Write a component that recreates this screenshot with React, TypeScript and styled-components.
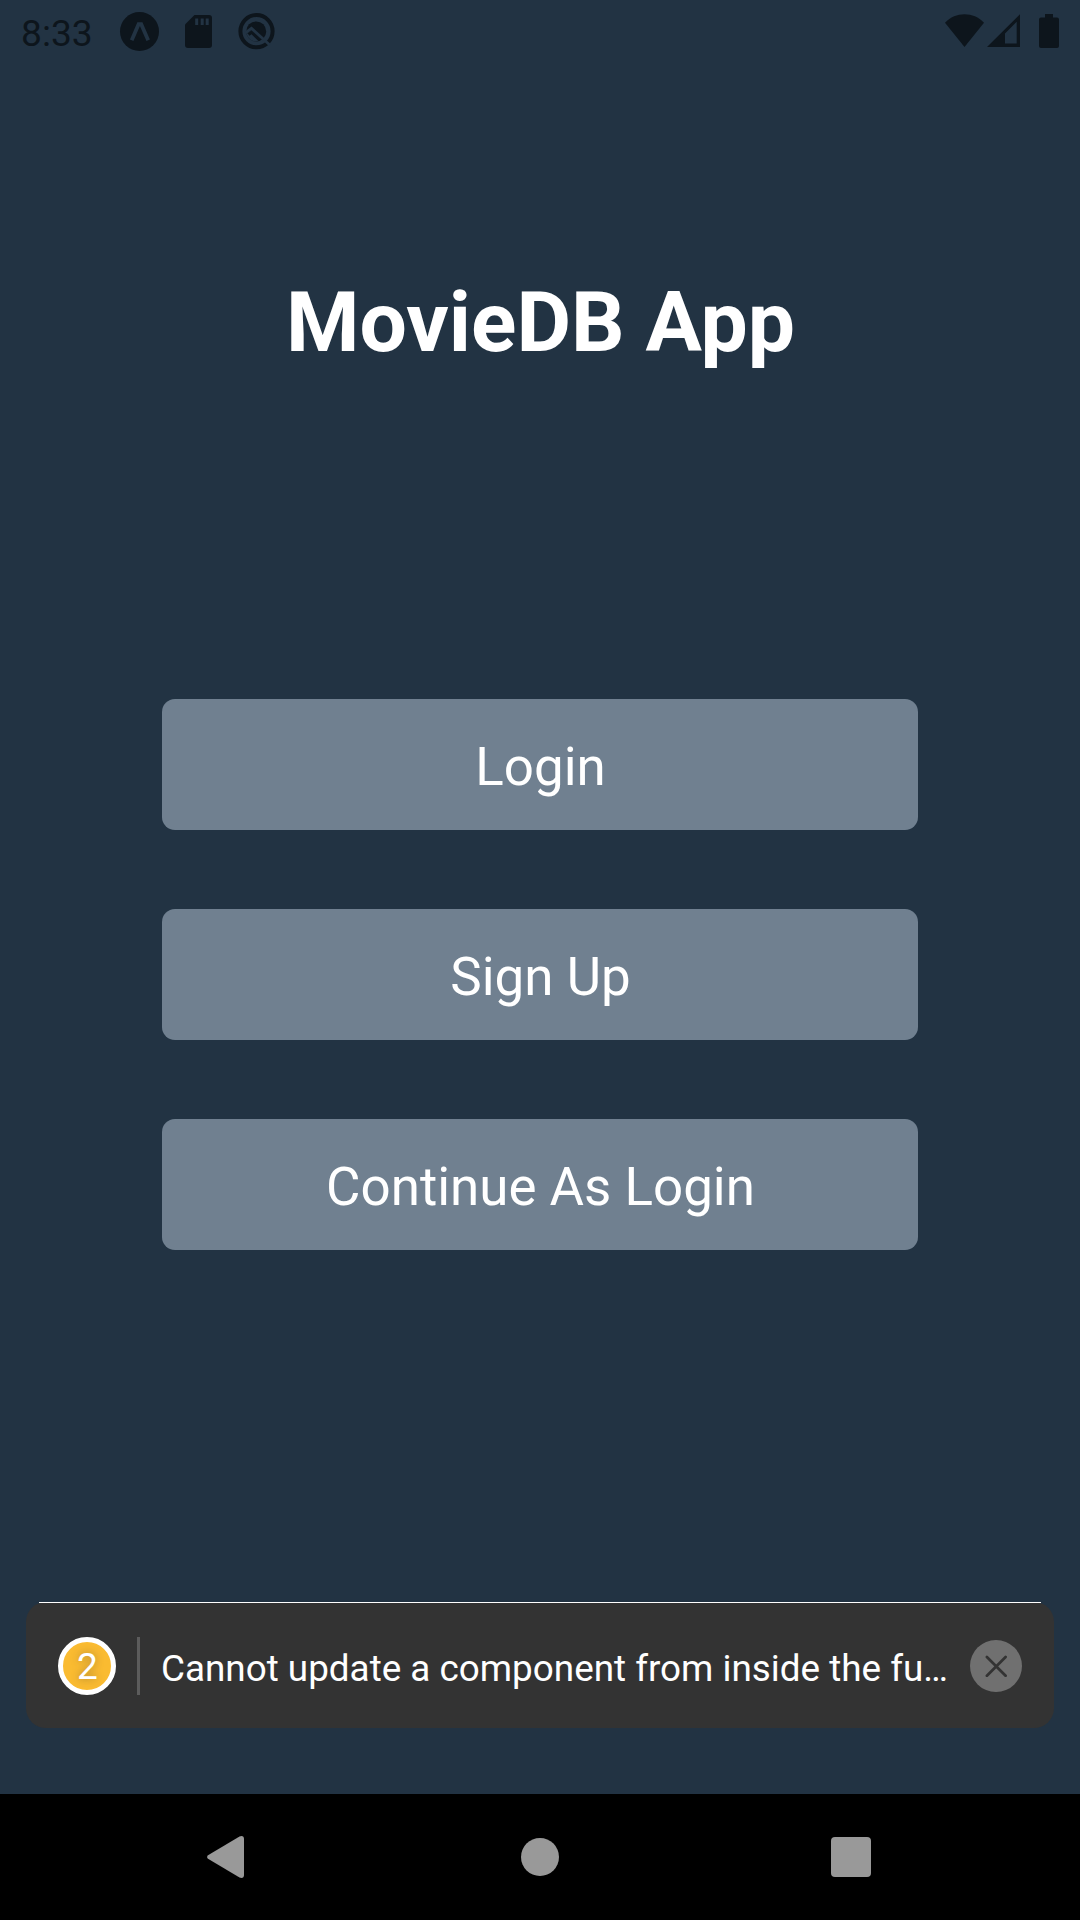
import React from "react";
import styled, { createGlobalStyle } from "styled-components";

const ink = "#0d151c";

const GlobalStyle = createGlobalStyle`
  *, *::before, *::after { box-sizing: border-box; }
  body { margin: 0; background: #223343; font-family: Roboto, "Noto Sans", sans-serif; }
  svg { display: block; flex: none; }
`;

const Screen = styled.div`
  display: flex;
  flex-direction: column;
  width: 1080px;
  height: 1920px;
  overflow: hidden;
  background: #223343;
`;

const StatusBar = styled.header`
  display: flex;
  justify-content: space-between;
  height: 63px;
  padding: 0 20px 0 21px;
  color: ${ink};
`;

const StatusGroup = styled.div<{ $gap?: number }>`
  display: flex;
  align-items: center;
  gap: ${(p) => p.$gap ?? 0}px;
`;

const Clock = styled.time`
  width: 98px;
  font-size: 37.2px;
  line-height: 43px;
  padding-top: 3px;
`;

const Content = styled.main`
  display: flex;
  flex: 1;
  flex-direction: column;
  align-items: center;
  min-height: 0;
`;

const Title = styled.h1`
  margin: 211px 0 327px;
  padding-left: 1px;
  color: #fff;
  font-size: 84px;
  font-weight: 700;
  line-height: 98px;
  white-space: nowrap;
`;

const Actions = styled.nav`
  display: flex;
  flex-direction: column;
  gap: 79px;
  width: 756px;
`;

const ActionButton = styled.button`
  display: flex;
  align-items: center;
  justify-content: center;
  height: 131px;
  padding: 5px 0 0 1px;
  border: 0;
  border-radius: 13px;
  background: #708090;
  color: #fff;
  font: 400 52.9px/62px Roboto, "Noto Sans", sans-serif;
  white-space: nowrap;
`;

const ToastArea = styled.section`
  display: flex;
  flex-direction: column;
  width: 1028px;
  margin: auto 0 66px;
`;

const ToastRule = styled.div`
  z-index: 1;
  height: 1px;
  margin: 0 13px;
  background: #fff;
`;

const Toast = styled.div`
  display: flex;
  align-items: center;
  height: 126px;
  margin-top: -1px;
  padding: 2px 32px 0;
  border-radius: 20px;
  background: #333;
  color: #fff;
`;

const Badge = styled.div`
  display: flex;
  flex: none;
  align-items: center;
  justify-content: center;
  width: 58px;
  height: 58px;
  padding: 1px 0 0 1px;
  border: 5px solid #fff;
  border-radius: 50%;
  background: #fabb31;
  font-size: 37px;
  line-height: 43px;
  text-shadow: 0 0 8px rgba(51, 51, 51, 0.4);
`;

const Divider = styled.div`
  flex: none;
  width: 3px;
  height: 58px;
  margin: 0 21px;
  background: #5c5c5c;
`;

const Message = styled.p`
  flex: 1;
  min-width: 0;
  margin: 0;
  padding-top: 5px;
  font-size: 36.85px;
  line-height: 43px;
  white-space: nowrap;
`;

const CloseButton = styled.button`
  display: flex;
  flex: none;
  align-items: center;
  justify-content: center;
  width: 52px;
  height: 52px;
  padding: 0;
  border: 0;
  border-radius: 50%;
  background: #707070;
`;

const SystemNav = styled.footer`
  display: grid;
  grid-template-columns: 314px 1fr 249px;
  align-items: center;
  height: 126px;
  padding-left: 207px;
  background: #000;
`;

const actions = ["Login", "Sign Up", "Continue As Login"];

export default function App() {
  return (
    <>
      <GlobalStyle />
      <Screen>
        <StatusBar>
          <StatusGroup>
            <Clock>8:33</Clock>
            <StatusGroup $gap={26}>
              <svg width="40" height="63" viewBox="0 0 40 63">
                <circle cx="20.5" cy="31.5" r="19.5" fill={ink} />
                <path d="M12.7 40.2 19.6 24.2H22.2L29.2 40.2" fill="none" stroke="#223343" strokeWidth="3.8" />
              </svg>
              <svg width="27" height="63" viewBox="0 0 27 63">
                <path d="M9.5 15H24Q27 15 27 18V45Q27 48 24 48H3Q0 48 0 45V24.5Z" fill={ink} />
                <path d="M11.7 18.5V25M17.2 18.5V25M22.2 18.5V25" stroke="#223343" strokeWidth="3" />
              </svg>
              <svg width="37" height="63" viewBox="0 0 37 63">
                <circle cx="18.5" cy="31.2" r="16.1" fill="none" stroke={ink} strokeWidth="4" />
                <circle cx="18.2" cy="31.4" r="10" fill={ink} />
                <path d="M8.5 34 13.6 30.4 22 38.4Q20 41.8 17 41.5 11 41 8.5 34Z" fill="#223343" />
                <path d="M10.6 34.6 13.6 32.3 21.5 40" fill="none" stroke={ink} strokeWidth="3" />
                <path d="M7.4 32.8 13.5 28.4 31.8 45" fill="none" stroke="#223343" strokeWidth="2.8" />
              </svg>
            </StatusGroup>
          </StatusGroup>
          <StatusGroup>
            <svg width="115" height="63" viewBox="945 0 115 63">
              <path d="M945 22.8C955.5 11.5 973.5 11.5 984 22.8L964.5 47Z" fill={ink} />
              <path d="M987 47 1020 14.2V47ZM1005 33.5V43.5H1016.7V21.8Z" fill={ink} fillRule="evenodd" />
              <path d="M1045 14H1053V17.5H1057Q1059 17.5 1059 19.5V46Q1059 48 1057 48H1041Q1039 48 1039 46V19.5Q1039 17.5 1041 17.5H1045Z" fill={ink} />
            </svg>
          </StatusGroup>
        </StatusBar>
        <Content>
          <Title>MovieDB App</Title>
          <Actions>
            {actions.map((label) => (
              <ActionButton key={label} type="button">{label}</ActionButton>
            ))}
          </Actions>
          <ToastArea>
            <ToastRule />
            <Toast>
              <Badge>2</Badge>
              <Divider />
              <Message>Cannot update a component from inside the fu…</Message>
              <CloseButton type="button" aria-label="Dismiss">
                <svg width="22" height="22" viewBox="0 0 22 22">
                  <path d="M1.9 2 20.6 20.7M20.6 2 1.9 20.7" stroke="#333" strokeWidth="2.7" strokeLinecap="round" />
                </svg>
              </CloseButton>
            </Toast>
          </ToastArea>
        </Content>
        <SystemNav>
          <svg width="37" height="42" viewBox="0 0 37 42">
            <path d="M1 19.2 32.5.4Q37-.9 37 3V39Q37 42.8 32.5 41.6L1 22.8Q-.8 21 1 19.2Z" fill="#999" />
          </svg>
          <svg width="38" height="38" viewBox="0 0 38 38">
            <circle cx="19" cy="19" r="19" fill="#999" />
          </svg>
          <svg width="40" height="40" viewBox="0 0 40 40">
            <rect width="40" height="40" rx="4" fill="#999" />
          </svg>
        </SystemNav>
      </Screen>
    </>
  );
}
